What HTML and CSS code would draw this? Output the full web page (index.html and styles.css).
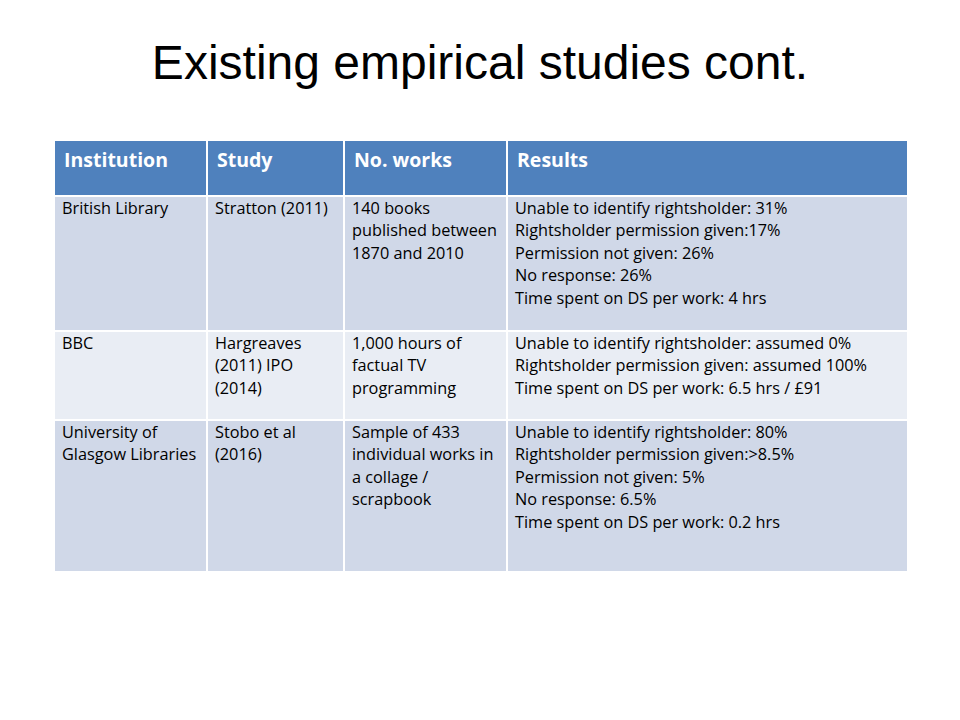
FILE: index.html
```html
<!DOCTYPE html>
<html>
<head>
<meta charset="utf-8">
<link rel="stylesheet" href="styles.css">
</head>
<body>
<div class="slide">
  <h1 class="title">Existing empirical studies cont.</h1>
  <div class="table">
    <div class="cell head">Institution</div>
    <div class="cell head">Study</div>
    <div class="cell head">No. works</div>
    <div class="cell head">Results</div>

    <div class="cell odd">British Library</div>
    <div class="cell odd">Stratton (2011)</div>
    <div class="cell odd">140 books<br>published between<br>1870 and 2010</div>
    <div class="cell odd">Unable to identify rightsholder: 31%<br>Rightsholder permission given:17%<br>Permission not given: 26%<br>No response: 26%<br>Time spent on DS per work: 4 hrs</div>

    <div class="cell even">BBC</div>
    <div class="cell even">Hargreaves<br>(2011) IPO<br>(2014)</div>
    <div class="cell even">1,000 hours of<br>factual TV<br>programming</div>
    <div class="cell even">Unable to identify rightsholder: assumed 0%<br>Rightsholder permission given: assumed 100%<br>Time spent on DS per work: 6.5 hrs / £91</div>

    <div class="cell odd">University of<br>Glasgow Libraries</div>
    <div class="cell odd">Stobo et al<br>(2016)</div>
    <div class="cell odd">Sample of 433<br>individual works in<br>a collage /<br>scrapbook</div>
    <div class="cell odd">Unable to identify rightsholder: 80%<br>Rightsholder permission given:&gt;8.5%<br>Permission not given: 5%<br>No response: 6.5%<br>Time spent on DS per work: 0.2 hrs</div>
  </div>
</div>
</body>
</html>
```
FILE: styles.css
```css
html, body {
  margin: 0;
  padding: 0;
  background: #ffffff;
}
.slide {
  width: 960px;
  height: 720px;
  box-sizing: border-box;
  padding-top: 32px;
  padding-left: 55px;
}
.title {
  margin: 0 0 0 -55px;
  width: 960px;
  text-align: center;
  font-family: "Liberation Sans", Arial, sans-serif;
  font-weight: normal;
  font-size: 48px;
  line-height: 62px;
  color: #000;
}
.table {
  margin-top: 47px;
  display: grid;
  grid-template-columns: 151px 135px 161px 399px;
  grid-template-rows: 54px 133px 87px 150px;
  gap: 2px;
  width: 852px;
  background: #fff;
}
.cell {
  font-family: "Open Sans", Lato, sans-serif;
  font-size: 16.3px;
  line-height: 22.4px;
  color: #000;
  padding: 0 2px 0 7px;
  white-space: nowrap;
}
.head {
  background: #4f81bd;
  color: #fff;
  font-weight: bold;
  font-size: 19.5px;
  line-height: 24px;
  padding: 7px 6px 0 9px;
}
.odd { background: #d0d8e8; }
.even { background: #e9edf4; }
```
